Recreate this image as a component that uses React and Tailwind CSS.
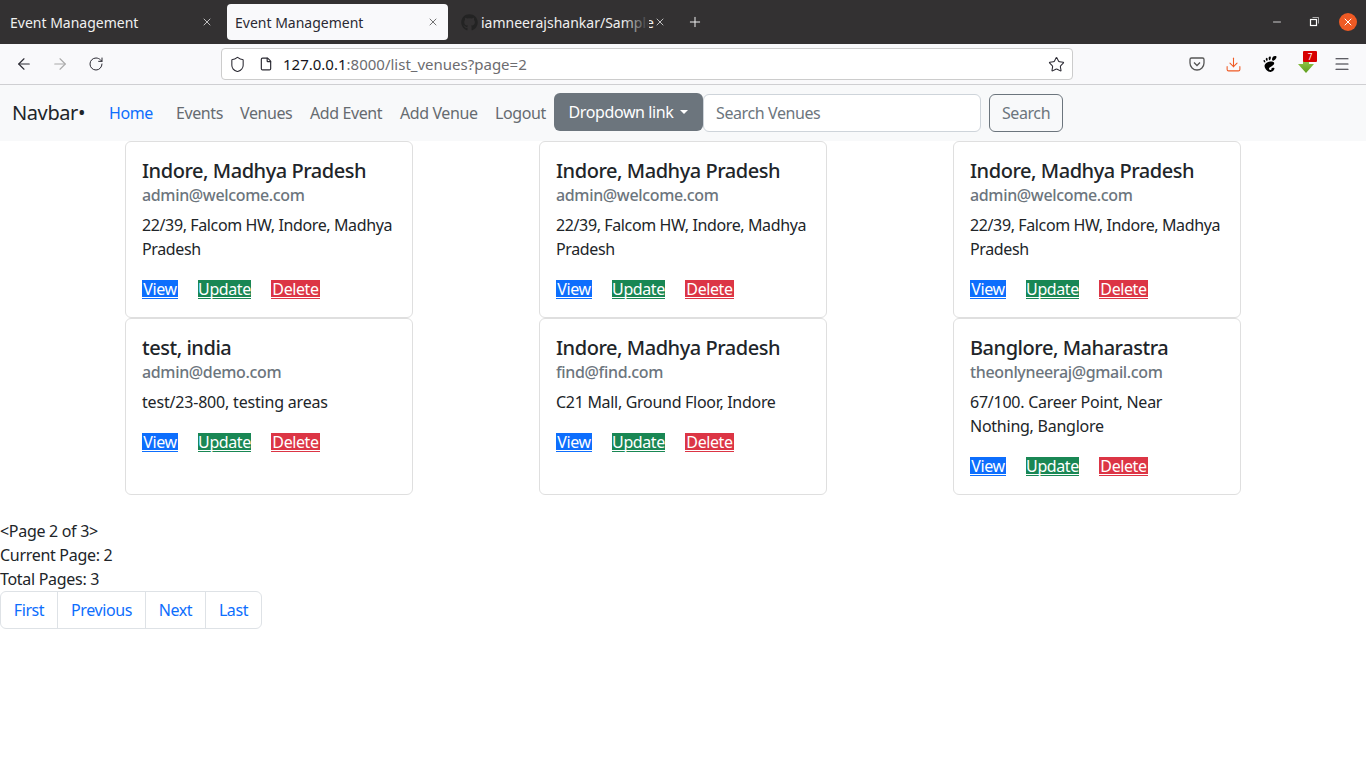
import React from "react";
import { ArrowLeft, ArrowRight, RotateCw, Shield, File, Star, Menu, Download, X, Plus, Minus } from "lucide-react";
import { FaGithub } from "react-icons/fa";
import { SiGnome } from "react-icons/si";

const font = "font-['Noto_Sans',sans-serif]";

function Tab({ active, label, icon, fade, className }) {
  return (
    <div className={`relative flex items-center h-9 rounded-[4px] ${active ? "bg-[#f9f9fb] text-[#2b2a33]" : "text-[#f0f0f0]"} ${className}`}>
      {icon}
      <span className="text-[14px] whitespace-nowrap">{label}</span>
      {fade && <div className="absolute left-[170px] top-0 h-9 w-[26px] bg-gradient-to-r from-transparent to-[#333132]" />}
      <X size={12} strokeWidth={1.5} className={`absolute right-[9px] top-[12px] ${active ? "text-[#444]" : "text-[#eee]"}`} />
    </div>
  );
}

function Card({ title, email, lines, track = "tracking-[-0.38px]" }) {
  const link = "h-[19px] leading-[18px] pb-[1px] border-b bg-clip-content text-white flex justify-center";
  return (
    <div className="w-[288px] justify-self-center border border-[#dfdfdf] rounded-[6px] p-4 bg-white flex flex-col">
      <h5 className="pt-[1px] text-[20px] leading-6 font-medium text-[#212529] tracking-[-0.46px] mb-[3px] whitespace-nowrap">{title}</h5>
      <h6 className="text-[16px] leading-[19px] font-medium text-[#6c757d] tracking-[-0.35px] mb-2 whitespace-nowrap">{email}</h6>
      <p className={`text-[16px] leading-6 text-[#212529] ${track} mb-[19px]`}>{lines}</p>
      <div className="flex gap-5 text-[16px] tracking-[-0.4px]">
        <a href="#" className={`${link} bg-[#0d6efd] border-[#0d6efd] w-9`}>View</a>
        <a href="#" className={`${link} bg-[#198754] border-[#198754] w-[53px]`}>Update</a>
        <a href="#" className={`${link} bg-[#dc3545] border-[#dc3545] w-[49px]`}>Delete</a>
      </div>
    </div>
  );
}

const addr = "22/39, Falcom HW, Indore, Madhya Pradesh";

export default function App() {
  return (
    <div className={`${font} min-h-[768px] bg-white`}>
      {/* tab strip */}
      <div className="h-11 bg-[#333132] flex items-center relative">
        <Tab label="Event Management" className="w-[222px] pl-2.5 mr-[5px]" />
        <Tab active label="Event Management" className="w-[221px] pl-2" />
        <Tab label="iamneerajshankar/Sample" fade className="w-[222px] ml-[5px] pl-[8px]" icon={<FaGithub size={17} className="text-[#232323] mr-[3px] shrink-0" />} />
        <Plus size={16} strokeWidth={1.5} className="text-[#f0f0f0] ml-[12px]" />
        <div className="ml-auto flex items-center">
          <Minus size={12} strokeWidth={1.5} className="text-white mr-[26px]" />
          <svg width="10" height="10" viewBox="0 0 10 10" className="mr-[20px] text-white" fill="none" stroke="currentColor"><rect x="1.5" y="2.5" width="6" height="6" strokeWidth="1.2" /><path d="M3.5 .5h6v6" strokeWidth=".6" /></svg>
          <div className="w-[18px] h-[18px] rounded-full bg-[#ef5a24] flex items-center justify-center mr-[9px]"><X size={12} strokeWidth={2} className="text-white" /></div>
        </div>
      </div>
      {/* toolbar */}
      <div className="h-[41px] bg-[#f9f9fb] border-b border-[#cfcfd2] flex items-center">
        <ArrowLeft size={18} strokeWidth={1.5} className="ml-[15px] text-[#2b2a33]" />
        <ArrowRight size={18} strokeWidth={1.5} className="ml-[18px] text-[#aaa]" />
        <RotateCw size={16} strokeWidth={1.5} className="ml-[19px] text-[#2b2a33]" />
        <div className="ml-[117px] w-[852px] h-8 bg-white border border-[#ccc] rounded-[4px] flex items-center">
          <Shield size={17} strokeWidth={1.5} className="ml-[7px] text-[#2b2a33]" />
          <File size={14} strokeWidth={2} className="ml-[13px] text-[#2b2a33]" />
          <span className="ml-[10px] text-[15px] text-[#6c6c70]"><span className="text-[#15141a]">127.0.0.1</span>:8000/list_venues?page=2</span>
          <Star size={17} strokeWidth={1.5} className="ml-auto mr-[7px] text-[#2b2a33]" />
        </div>
        <svg width="16" height="16" viewBox="0 0 16 16" className="ml-[116px]" fill="none" stroke="#555" strokeWidth="1.3"><path d="M2.5 2h11A1.5 1.5 0 0 1 15 3.5V7A7 7 0 0 1 1 7V3.5A1.5 1.5 0 0 1 2.5 2z" /><path d="M5 6.5l3 3 3-3" /></svg>
        <Download size={17} strokeWidth={1.5} className="ml-[20px] text-[#ef5a24]" />
        <SiGnome size={16} className="ml-[20px] text-black" />
        <div className="relative ml-[20px] w-5 h-5">
          <svg width="16" height="18" viewBox="0 0 16 18" className="absolute left-0 top-[2px]"><defs><linearGradient id="g" x1="0" y1="0" x2="0" y2="1"><stop offset="0" stopColor="#a6d65a" /><stop offset="1" stopColor="#5f9e1e" /></linearGradient></defs><path d="M5 0h6v8h5l-8 9-8-9h5z" fill="url(#g)" /></svg>
          <span className="absolute left-[5px] -top-[3px] w-[14px] h-[11px] bg-[#d70000] rounded-[1px] text-white text-[8px] leading-[11px] text-center">7</span>
        </div>
        <Menu size={18} strokeWidth={1.5} className="ml-[15px] text-[#2b2a33]" />
      </div>
      {/* navbar */}
      <nav className="h-14 bg-[#f8f9fa] flex items-center text-[16px] tracking-[-0.4px]">
        <a className="ml-3 w-[97px] text-[20px] text-[#212529] tracking-[-0.4px]">Navbar•</a>
        <a className="w-[67px] text-[#0d6efd]">Home</a>
        <a className="w-16 text-[#666b70]">Events</a>
        <a className="w-[70px] text-[#666b70]">Venues</a>
        <a className="w-[90px] text-[#666b70]">Add Event</a>
        <a className="w-[95px] text-[#666b70]">Add Venue</a>
        <a className="w-[59px] text-[#666b70]">Logout</a>
        <button className="w-[149px] h-[38px] mb-[2px] rounded-[6px] bg-[#6c757d] text-white flex items-center justify-center gap-[7px]">
          Dropdown link
          <span className="border-t-[4.8px] border-x-[4.8px] border-x-transparent border-t-white w-0 h-0 mb-[1px]" />
        </button>
        <input readOnly placeholder="Search Venues" className="w-[278px] h-[38px] bg-white border border-[#ced4da] rounded-[6px] px-3 placeholder:text-[#6c757d] outline-none" />
        <button className="ml-2 w-[74px] h-[38px] border border-[#6c757d] rounded-[6px] text-[#6c757d]">Search</button>
      </nav>
      {/* cards */}
      <div className="w-[1242px] mx-auto grid grid-cols-3 auto-rows-[177px]">
        <Card title="Indore, Madhya Pradesh" email="admin@welcome.com" lines={addr} />
        <Card title="Indore, Madhya Pradesh" email="admin@welcome.com" lines={addr} />
        <Card title="Indore, Madhya Pradesh" email="admin@welcome.com" lines={addr} />
        <Card title="test, india" email="admin@demo.com" lines="test/23-800, testing areas" track="tracking-[-0.19px]" />
        <Card title="Indore, Madhya Pradesh" email="find@find.com" lines="C21 Mall, Ground Floor, Indore" track="tracking-[-0.3px]" />
        <Card title="Banglore, Maharastra" email="theonlyneeraj@gmail.com" lines={<>67/100. Career Point, Near<br />Nothing, Banglore</>} track="tracking-[-0.25px]" />
      </div>
      {/* pagination */}
      <div className="mt-6 text-[16px] leading-6 text-[#212529] tracking-[-0.3px]">
        <div>&lt;Page 2 of 3&gt;</div>
        <div>Current Page: 2</div>
        <div>Total Pages: 3</div>
      </div>
      <ul className="flex w-[262px] h-[38px] border border-[#dee2e6] rounded-[6px] text-[16px] tracking-[-0.4px] text-[#0d6efd]">
        <li className="w-[57px] flex items-center justify-center border-r border-[#dee2e6]">First</li>
        <li className="w-[88px] flex items-center justify-center border-r border-[#dee2e6]">Previous</li>
        <li className="w-[60px] flex items-center justify-center border-r border-[#dee2e6]">Next</li>
        <li className="flex-1 flex items-center justify-center">Last</li>
      </ul>
    </div>
  );
}
